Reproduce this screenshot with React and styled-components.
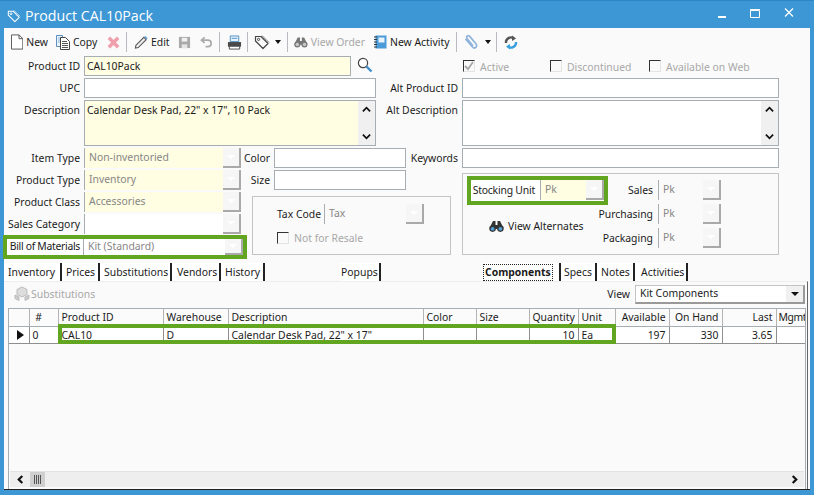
import React from "react";
import styled, { createGlobalStyle } from "styled-components";

const Global = createGlobalStyle`
  html, body { margin: 0; padding: 0; background: #3d97d5; }
  * { box-sizing: border-box; }
  body { font-family: "Noto Sans", Arial, sans-serif; font-size: 10.4px; color: #1a1a1a; }
`;

const Window = styled.div`
  width: 814px; height: 495px; display: flex; flex-direction: column;
  background: #3d97d5; border-top: 1px solid #2f86c6; overflow: hidden;
`;
const TitleBar = styled.div`
  height: 27px; flex: none; display: flex; align-items: center; padding: 2px 20px 0 7px;
  color: #fff; font-family: "Open Sans", sans-serif; font-size: 14.2px;
`;
const TitleText = styled.span` margin-left: 4px; flex: 1; `;
const WinButtons = styled.div` display: flex; align-items: center; gap: 24px; margin-top: -6px; `;
const Client = styled.div`
  flex: 1; display: flex; flex-direction: column; margin: 0 4px 5px 4px; background: #fafafa;
  border-bottom: 1px solid #222; min-height: 0;
`;
const Toolbar = styled.div` height: 28px; flex: none; display: flex; align-items: center; `;
const ToolButton = styled.span`
  display: inline-flex; align-items: center; gap: ${p => p.$gap ?? 3}px; height: 22px; white-space: nowrap; flex: none;
  margin-left: ${p => p.$ml || 0}px; width: ${p => (p.$w ? `${p.$w}px` : "auto")};
  color: ${p => (p.$off ? "#a8a8a8" : "#1a1a1a")};
`;
const ToolSep = styled.span` width: 1px; height: 20px; background: #b8bcc0; margin-left: ${p => p.$ml || 0}px; flex: none; `;
const Caret = styled.span`
  width: 0; height: 0; border: 3px solid transparent; border-top: 4px solid #111; border-bottom: 0; margin-left: 3px;
`;

const TopForm = styled.div` display: flex; height: 92px; flex: none; `;
const TopLeft = styled.div` width: 376px; flex: none; display: flex; flex-direction: column; gap: 2px; `;
const TopRight = styled.div` flex: 1; display: flex; flex-direction: column; gap: 2px; `;
const Row = styled.div` display: flex; align-items: flex-start; height: ${p => p.$h || 20}px; flex: none; `;
const Label = styled.label`
  width: ${p => p.$w || 76}px; flex: none; text-align: right; line-height: ${p => p.$lh || 20}px; white-space: nowrap;
  margin-right: ${p => (p.$gap === undefined ? 4 : p.$gap)}px; letter-spacing: ${p => p.$ls || 0}px;
`;
const Input = styled.div`
  width: ${p => p.$w}px; height: ${p => p.$h || 20}px; flex: none; position: relative;
  background: ${p => (p.$req ? "#fffde2" : "#fff")}; border: 1px solid #a6adb3;
  padding: 2px 2px; line-height: 14px; white-space: nowrap; overflow: hidden;
`;
const MemoScroll = styled.div`
  position: absolute; right: 0; top: 0; bottom: 0; width: 17px; background: #f0f0f0;
  display: flex; flex-direction: column; justify-content: space-between; align-items: center; padding: 4px 0;
`;
const SearchButton = styled.span` display: inline-flex; margin: 1px 0 0 6px; `;
const CheckRow = styled.div` display: flex; height: 20px; align-items: center; padding-left: 83px; flex: none; color: #a8a8a8; `;
const CheckItem = styled.span` display: inline-flex; align-items: center; gap: 5px; width: ${p => p.$w}px; flex: none; white-space: nowrap; line-height: 14px; `;
const CheckText = styled.span` padding-top: 2px; `;
const CheckBox = styled.span`
  width: 12px; height: 12px; flex: none; display: inline-flex; background: #fafafa;
  border-top: 1px solid #333; border-left: 1px solid #333; border-right: 1px solid #e4e4e4; border-bottom: 1px solid #e4e4e4;
`;

const BottomForm = styled.div` display: flex; height: 111px; flex: none; `;
const ComboCol = styled.div` width: 237px; flex: none; display: flex; flex-direction: column; gap: 2px; `;
const MidCol = styled.div` width: 221px; flex: none; display: flex; flex-direction: column; gap: 2px; `;
const RightCol = styled.div` flex: 1; display: flex; flex-direction: column; `;
const Combo = styled.div`
  width: ${p => p.$w}px; height: ${p => p.$h || 20}px; flex: none; display: flex; justify-content: space-between;
  background: ${p => (p.$req ? "#fffde2" : p.$fill || "#fff")}; border-left: 1px solid #a6adb3;
  padding-left: 4px; color: #868686; line-height: 14px; white-space: nowrap; overflow: hidden;
`;
const ComboText = styled.span` padding-top: ${p => p.$pt ?? 2}px; `;
const ComboButton = styled.span`
  width: 18px; flex: none; height: 100%; background: #f6f6f6; display: flex; align-items: center; justify-content: center;
  border-right: 2px solid #a9a9a9; border-bottom: 2px solid #a9a9a9;
`;
const ComboArrow = styled.span`
  width: 0; height: 0; border: 4px solid transparent; border-top: 4px solid ${p => p.$c || "#fff"}; border-bottom: 0;
`;
const BomRow = styled.div`
  display: flex; align-items: flex-start; height: 24px; flex: none; width: 244px; margin: -1px 0 0 -1px;
  border: 4px solid #62a521; background: #fff;
`;
const TaxGroup = styled.div`
  width: 199px; height: 59px; margin: 4px 0 0 11px; flex: none; display: flex; flex-direction: column;
  border: 1px solid #c4c4c4; padding: 7px 0 0 23px; gap: 3px; background: #fafafa; position: relative;
`;
const TaxRow = styled.div` display: flex; `;
const TaxCheck = styled.div` display: flex; align-items: center; gap: 5px; color: #a8a8a8; height: 22px; padding-left: 1px; `;
const MidRow = styled.div` display: flex; height: 20px; flex: none; `;
const UnitGroup = styled.div`
  width: 317px; height: 82px; margin-top: 5px; border: 1px solid #c4c4c4; display: flex; flex: none; padding: 2px 0 0 4px;
`;
const UnitLeft = styled.div` width: 131px; flex: none; display: flex; flex-direction: column; `;
const Stocking = styled.div`
  width: 141px; height: 29px; flex: none; border: 4px solid #62a521; background: #fff; display: flex;
`;
const ViewAlt = styled.div` display: flex; align-items: center; gap: 4px; padding: 14px 0 0 22px; white-space: nowrap; `;
const UnitRight = styled.div` display: flex; flex-direction: column; gap: 4px; padding-top: 4px; `;

const TabBar = styled.div` display: flex; height: 18px; margin-top: 4px; flex: none; align-items: stretch; position: relative; z-index: 1; `;
const Tab = styled.div`
  width: ${p => p.$w}px; margin-left: ${p => p.$ml || 0}px; flex: none; line-height: 18px;
  white-space: nowrap; background: #fff; padding-left: ${p => p.$pl ?? 0}px;
  border-right: 2px solid #222;
  font-weight: ${p => (p.$active ? 700 : 400)};
`;
const Focus = styled.span` outline: 1px dotted #222; padding: 0 1px; display: inline-block; line-height: 15px; `;
const Panel = styled.div`
  flex: 1; display: flex; flex-direction: column; min-height: 0; padding: 0 0 0 4px; margin-right: 2px;
  border-right: 1px solid #666; border-top: 1px solid #eee;
`;
const PanelBar = styled.div` height: 26px; flex: none; display: flex; align-items: center; justify-content: space-between; padding: 0 0 2px 6px; `;
const SubButton = styled.span` display: inline-flex; align-items: center; gap: 1px; color: #a8a8a8; `;
const ViewBox = styled.div` display: flex; align-items: center; gap: 5px; margin-right: 2px; `;
const ViewCombo = styled.div`
  width: 170px; height: 19px; border: 1px solid #c4c4c4; border-right: 2px solid #999; border-bottom: 2px solid #999;
  background: #fff; display: flex; justify-content: space-between; padding-left: 4px; line-height: 14px;
`;
const ViewButton = styled.span` width: 17px; background: #f0f0f0; display: flex; align-items: center; justify-content: center; `;
const GridWrap = styled.div`
  flex: 1; position: relative; display: flex; flex-direction: column; min-height: 0;
  border-left: 1px solid #a6adb3; border-right: 1px solid #a6adb3; border-top: 1px solid #a6adb3; width: 798px;
`;
const GridBody = styled.div` flex: 1; min-height: 0; overflow: hidden; background: #fafafa; `;
const Table = styled.table` border-collapse: collapse; table-layout: fixed; width: 796px; `;
const Th = styled.th`
  height: 17px; font-weight: 400; padding: 0 ${p => (p.$last ? 0 : 3)}px 0 ${p => (p.$last ? 2 : 3)}px; border-right: 1px solid #b5b5b5; border-bottom: 1px solid #a6adb3;
  text-align: ${p => p.$a || "left"}; background: #fbfbfb; white-space: nowrap; overflow: hidden;
  letter-spacing: ${p => (p.$last ? -0.4 : 0)}px;
`;
const Td = styled.td`
  height: 17px; padding: 0 3px; border-right: 1px solid #8f8f8f; border-bottom: 1px solid #8f8f8f; background: #fff;
  text-align: ${p => p.$a || "left"}; white-space: nowrap; overflow: hidden;
`;
const RowMarker = styled.span`
  display: block; width: 0; height: 0; border: 5px solid transparent; border-left: 7px solid #111; border-right: 0; margin-left: 5px;
`;
const RowHighlight = styled.div`
  position: absolute; left: 49px; top: 15px; width: 558px; height: 20px; border: 4px solid #62a521; pointer-events: none;
`;
const HScroll = styled.div`
  height: 16px; flex: none; margin: 0 1px 2px 1px; background: #eeeeee; display: flex; align-items: center; justify-content: space-between;
  padding-right: 5px; border-top: 1px solid #e2e2e2;
`;
const ScrollLeft = styled.div` display: flex; align-items: center; gap: 5px; padding-left: 6px; height: 100%; `;
const Thumb = styled.span` width: 15px; height: 100%; background: #cfcfcf; display: flex; align-items: center; justify-content: center; gap: 1px; `;
const Grip = styled.i` width: 1px; height: 9px; background: #555; display: block; `;

const Chev = ({ dir = "up", size = 9, w = 2 }) => {
  const d = { up: "M1 7 L5 3 L9 7", down: "M1 3 L5 7 L9 3", left: "M7 1 L3 5 L7 9", right: "M3 1 L7 5 L3 9" }[dir];
  return <svg width={size} height={size} viewBox="0 0 10 10"><path d={d} fill="none" stroke="#111" strokeWidth={w} /></svg>;
};

const TagIcon = ({ c = "#444", size = 16, fill = "none" }) => (
  <svg width={size} height={size} viewBox="0 0 16 16">
    <path d="M1.5 2.5h5.5l7 7-5 5-7.5-7.5z" fill={fill} stroke={c} strokeWidth="1.2" strokeLinejoin="round" />
    <circle cx="4.6" cy="5.4" r="1.1" fill="none" stroke={c} />
    <path d="M8 1.5l7 7" stroke={c} strokeWidth="1" opacity=".7" />
  </svg>
);
const PageIcon = () => (
  <svg width="13" height="16" viewBox="0 0 13 16"><path d="M.5.5h8l4 4v11H.5z M8.5.5v4h4" fill="#fff" stroke="#555" /></svg>
);
const CopyIcon = () => (
  <svg width="14" height="16" viewBox="0 0 14 16">
    <path d="M.5 1.5h6v11h-6z" fill="#eaf3fb" stroke="#5b8fbf" />
    <path d="M2 4h3M2 6h3M2 8h3" stroke="#8db4d8" />
    <path d="M4.5 3.5h5l4 4v8h-9z" fill="#fff" stroke="#444" />
    <path d="M6 7.5h5M6 9.5h6M6 11.5h6M6 13.5h6" stroke="#555" />
  </svg>
);
const DeleteIcon = () => (
  <svg width="13" height="13" viewBox="0 0 14 14"><path d="M2 2l10 10M12 2L2 12" stroke="#f0a0ac" strokeWidth="3.8" /></svg>
);
const PencilIcon = () => (
  <svg width="15" height="16" viewBox="0 0 16 16">
    <path d="M2 11.5L10.5 3 13 5.5 4.5 14 1.5 14.5z" fill="#eee" stroke="#555" strokeWidth="1.1" />
    <path d="M11 2.5l1-1 2.5 2.5-1 1z" fill="#4a9bd8" />
  </svg>
);
const SaveIcon = () => (
  <svg width="13" height="13" viewBox="0 0 14 14">
    <path d="M1 1h12v12H1z" fill="#a9a9a9" /><path d="M4 2h6v4H4z" fill="#f0f0f0" /><path d="M4 9h6v4H4z" fill="#e4e4e4" />
  </svg>
);
const UndoIcon = () => (
  <svg width="13" height="13" viewBox="0 0 14 14">
    <path d="M5 1.5L1.5 4.5 5 7.5" fill="none" stroke="#aaa" strokeWidth="1.8" />
    <path d="M2 4.5h6.5a3.2 3.2 0 0 1 0 7H6" fill="none" stroke="#aaa" strokeWidth="1.8" />
  </svg>
);
const PrintIcon = () => (
  <svg width="15" height="15" viewBox="0 0 16 15">
    <path d="M3.5 .5h9v6h-9z" fill="#eaf3fb" stroke="#4a90c8" /><path d="M5 3h6" stroke="#4a90c8" />
    <path d="M1 7h14v5H1z" fill="#4a4a4a" /><path d="M2.5 11.5h11v3h-11z" fill="#fff" stroke="#4a4a4a" />
  </svg>
);
const BinoIcon = ({ c = "#777", lens = "#c8c8c8" }) => (
  <svg width="15" height="13" viewBox="0 0 15 13">
    <path d="M4 1h2.5v4h2V1H11l3.5 7h-14z" fill={c} />
    <circle cx="3.6" cy="8.6" r="3.3" fill={c} /><circle cx="11.4" cy="8.6" r="3.3" fill={c} />
    <circle cx="3.6" cy="8.8" r="1.9" fill={lens} /><circle cx="11.4" cy="8.8" r="1.9" fill={lens} />
    <path d="M6 6.5h3v2.5H6z" fill={c} />
  </svg>
);
const ActivityIcon = () => (
  <svg width="13" height="14" viewBox="0 0 13 14">
    <path d="M1.5 .5h11v13h-11z" fill="#4a9bd8" /><path d="M4.5 2.5h6v5h-6z" fill="#e8f3fb" />
    <path d="M0 2h3M0 4.5h3M0 7h3M0 9.5h3M0 12h3" stroke="#333" />
  </svg>
);
const ClipIcon = () => (
  <svg width="16" height="16" viewBox="0 0 16 16">
    <path d="M2.5 5l7 8a2.3 2.3 0 0 0 3.6-3L6.5 2.2a1.7 1.7 0 0 0-2.7 2L10 12" fill="none" stroke="#8fb4dc" strokeWidth="1.7" />
  </svg>
);
const RefreshIcon = () => (
  <svg width="14" height="15" viewBox="0 0 14 15">
    <path d="M2 8a5 5 0 0 1 8-4.5" fill="none" stroke="#555" strokeWidth="2.4" /><path d="M8 .5l4 3-4 2.5z" fill="#555" />
    <path d="M12 7a5 5 0 0 1-8 4.5" fill="none" stroke="#37a0e0" strokeWidth="2.4" /><path d="M6 14.5l-4-3 4-2.5z" fill="#37a0e0" />
  </svg>
);
const SearchIcon = () => (
  <svg width="16" height="16" viewBox="0 0 16 16">
    <circle cx="6" cy="6" r="4.6" fill="#fff" stroke="#444" strokeWidth="1.2" />
    <path d="M9.5 9.5L14.5 14.5" stroke="#3b8fd0" strokeWidth="2.4" />
  </svg>
);
const SubsIcon = () => (
  <svg width="16" height="16" viewBox="0 0 16 16">
    <path d="M8 1l5 2.5v5L8 11 3 8.5v-5z" fill="#ddd" stroke="#bbb" />
    <path d="M1 9l4 2v3.5L1 12.5zM15 9l-4 2v3.5l4-2z" fill="#ccc" stroke="#bbb" />
  </svg>
);
const MiniCheck = () => (
  <svg width="10" height="10" viewBox="0 0 10 10"><path d="M1 5l3 3 5-7" fill="none" stroke="#a8a8a8" strokeWidth="1.8" /></svg>
);

const ComboField = ({ w, text, req, fill }) => (
  <Combo $w={w} $req={req} $fill={fill}>
    <ComboText>{text}</ComboText>
    <ComboButton><ComboArrow /></ComboButton>
  </Combo>
);

const columns = [20, 29, 105, 65, 195, 53, 53, 49, 37, 54, 53, 54, 29];

export default function App() {
  return (
    <Window>
      <Global />
      <TitleBar>
        <TagIcon c="#fff" size={14} />
        <TitleText>Product CAL10Pack</TitleText>
        <WinButtons>
          <svg width="8" height="14" viewBox="0 0 8 14"><path d="M0 10h8v2H0z" fill="#fff" /></svg>
          <svg width="10" height="14" viewBox="0 0 10 14"><path d="M.5 4.5h9v7h-9z M0 3.5h10" fill="none" stroke="#fff" /></svg>
          <svg width="10" height="14" viewBox="0 0 10 14"><path d="M1 2.5l8 8M9 2.5l-8 8" stroke="#fff" strokeWidth="1.3" /></svg>
        </WinButtons>
      </TitleBar>
      <Client>
        <Toolbar>
          <ToolButton $ml={7} $w={37}><PageIcon />New</ToolButton>
          <ToolButton $ml={8} $w={42}><CopyIcon />Copy</ToolButton>
          <ToolButton $ml={9}><DeleteIcon /></ToolButton>
          <ToolSep $ml={6} />
          <ToolButton $ml={7} $gap={2} $w={36}><PencilIcon />Edit</ToolButton>
          <ToolButton $ml={8}><SaveIcon /></ToolButton>
          <ToolButton $ml={9}><UndoIcon /></ToolButton>
          <ToolSep $ml={6} />
          <ToolButton $ml={7}><PrintIcon /></ToolButton>
          <ToolSep $ml={5} />
          <ToolButton $ml={6} $gap={2}><TagIcon /><Caret /></ToolButton>
          <ToolSep $ml={6} />
          <ToolButton $ml={6} $w={71} $off><BinoIcon />View Order</ToolButton>
          <ToolButton $ml={9} $w={77}><ActivityIcon />New Activity</ToolButton>
          <ToolSep $ml={5} />
          <ToolButton $ml={6} $gap={3}><ClipIcon /><Caret /></ToolButton>
          <ToolSep $ml={5} />
          <ToolButton $ml={7}><RefreshIcon /></ToolButton>
        </Toolbar>
        <TopForm>
          <TopLeft>
            <Row>
              <Label>Product ID</Label>
              <Input $w={267} $req>CAL10Pack</Input>
              <SearchButton><SearchIcon /></SearchButton>
            </Row>
            <Row><Label>UPC</Label><Input $w={292} /></Row>
            <Row $h={46}>
              <Label>Description</Label>
              <Input $w={292} $h={46} $req>
                Calendar Desk Pad, 22" x 17", 10 Pack
                <MemoScroll><Chev dir="up" /><Chev dir="down" /></MemoScroll>
              </Input>
            </Row>
          </TopLeft>
          <TopRight>
            <CheckRow>
              <CheckItem $w={87}><CheckBox><MiniCheck /></CheckBox><CheckText>Active</CheckText></CheckItem>
              <CheckItem $w={99}><CheckBox /><CheckText>Discontinued</CheckText></CheckItem>
              <CheckItem $w={120}><CheckBox /><CheckText>Available on Web</CheckText></CheckItem>
            </CheckRow>
            <Row><Label $w={78}>Alt Product ID</Label><Input $w={317} /></Row>
            <Row $h={46}>
              <Label $w={78}>Alt Description</Label>
              <Input $w={317} $h={46}>
                <MemoScroll><Chev dir="up" /><Chev dir="down" /></MemoScroll>
              </Input>
            </Row>
          </TopRight>
        </TopForm>
        <BottomForm>
          <ComboCol>
            <Row><Label>Item Type</Label><ComboField w={157} text="Non-inventoried" req /></Row>
            <Row><Label>Product Type</Label><ComboField w={157} text="Inventory" req /></Row>
            <Row><Label>Product Class</Label><ComboField w={157} text="Accessories" req /></Row>
            <Row><Label>Sales Category</Label><ComboField w={157} text="" /></Row>
            <BomRow>
              <Label $w={73} $lh={14} $gap={3} $ls={-0.3}>Bill of Materials</Label>
              <Combo $w={160} $h={16}><ComboText $pt={0}>Kit (Standard)</ComboText><ComboButton><ComboArrow /></ComboButton></Combo>
            </BomRow>
          </ComboCol>
          <MidCol>
            <MidRow>
              <Label $w={29}>Color</Label>
              <Input $w={132} />
              <Label $w={52} $gap={0}>Keywords</Label>
            </MidRow>
            <MidRow><Label $w={29}>Size</Label><Input $w={132} /></MidRow>
            <TaxGroup>
              <TaxRow>
                <Label $w={45} $gap={3}>Tax Code</Label>
                <Combo $w={100} $fill="#fafafa"><ComboText>Tax</ComboText><ComboButton><ComboArrow /></ComboButton></Combo>
              </TaxRow>
              <TaxCheck><CheckBox />Not for Resale</TaxCheck>
            </TaxGroup>
          </MidCol>
          <RightCol>
            <Input $w={317} />
            <UnitGroup>
              <UnitLeft>
                <Stocking>
                  <Label $w={64} $lh={20} $gap={5} $ls={-0.2}>Stocking Unit</Label>
                  <Combo $w={64} $req><ComboText>Pk</ComboText><ComboButton><ComboArrow /></ComboButton></Combo>
                </Stocking>
                <ViewAlt><BinoIcon c="#333" lens="#4fa0d8" />View Alternates</ViewAlt>
              </UnitLeft>
              <UnitRight>
                <Row><Label $w={55} $gap={5}>Sales</Label><ComboField w={63} text="Pk" fill="#fafafa" /></Row>
                <Row><Label $w={55} $gap={5}>Purchasing</Label><ComboField w={63} text="Pk" fill="#fafafa" /></Row>
                <Row><Label $w={55} $gap={5}>Packaging</Label><ComboField w={63} text="Pk" fill="#fafafa" /></Row>
              </UnitRight>
            </UnitGroup>
          </RightCol>
        </BottomForm>
        <TabBar>
          <Tab $w={58} $pl={4}>Inventory</Tab>
          <Tab $w={38} $pl={4}>Prices</Tab>
          <Tab $w={72} $pl={4}>Substitutions</Tab>
          <Tab $w={49} $pl={5}>Vendors</Tab>
          <Tab $w={44} $pl={4}>History</Tab>
          <Tab $w={41} $ml={75} $pl={1}>Popups</Tab>
          <Tab $w={79} $ml={101} $pl={2} $active><Focus>Components</Focus></Tab>
          <Tab $w={36} $pl={3}>Specs</Tab>
          <Tab $w={38} $pl={4}>Notes</Tab>
          <Tab $w={53} $pl={6}>Activities</Tab>
        </TabBar>
        <Panel>
          <PanelBar>
            <SubButton><SubsIcon />Substitutions</SubButton>
            <ViewBox>
              View
              <ViewCombo>
                Kit Components
                <ViewButton><ComboArrow $c="#111" /></ViewButton>
              </ViewCombo>
            </ViewBox>
          </PanelBar>
          <GridWrap>
            <GridBody>
              <Table>
                <colgroup>{columns.map((w, i) => <col key={i} style={{ width: w }} />)}</colgroup>
                <thead>
                  <tr>
                    <Th />
                    <Th>&nbsp;#</Th>
                    <Th>Product ID</Th>
                    <Th>Warehouse</Th>
                    <Th>Description</Th>
                    <Th>Color</Th>
                    <Th>Size</Th>
                    <Th>Quantity</Th>
                    <Th>Unit</Th>
                    <Th $a="right">Available</Th>
                    <Th $a="right">On Hand</Th>
                    <Th $a="right">Last</Th>
                    <Th $last>Mgmt</Th>
                  </tr>
                </thead>
                <tbody>
                  <tr>
                    <Td><RowMarker /></Td>
                    <Td>0</Td>
                    <Td>CAL10</Td>
                    <Td>D</Td>
                    <Td>Calendar Desk Pad, 22" x 17"</Td>
                    <Td />
                    <Td />
                    <Td $a="right">10</Td>
                    <Td>Ea</Td>
                    <Td $a="right">197</Td>
                    <Td $a="right">330</Td>
                    <Td $a="right">3.65</Td>
                    <Td />
                  </tr>
                </tbody>
              </Table>
            </GridBody>
            <RowHighlight />
            <HScroll>
              <ScrollLeft>
                <Chev dir="left" w={2.4} />
                <Thumb><Grip /><Grip /><Grip /><Grip /></Thumb>
              </ScrollLeft>
              <Chev dir="right" w={2.4} />
            </HScroll>
          </GridWrap>
        </Panel>
      </Client>
    </Window>
  );
}
